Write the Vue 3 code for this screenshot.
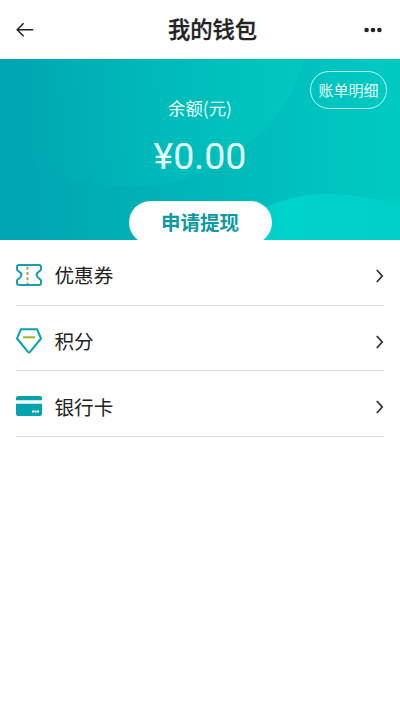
<script setup>
const rows = [
  { id: 'coupon', label: '优惠券' },
  { id: 'points', label: '积分' },
  { id: 'card', label: '银行卡' },
]
</script>

<template>
  <div class="page">
    <header class="bar">
      <svg class="back" width="18" height="16" viewBox="0 0 18 16" fill="none" stroke="#222" stroke-width="1.5">
        <path d="M7.6 1.2 1.2 7.7l6.4 6.6M1.2 7.7H17.3" />
      </svg>
      <h1 class="title">我的钱包</h1>
      <svg class="more" width="18" height="6" viewBox="0 0 18 6" fill="#222">
        <circle cx="2.6" cy="3" r="2.3" />
        <circle cx="9" cy="3" r="2.3" />
        <circle cx="15.4" cy="3" r="2.3" />
      </svg>
    </header>

    <section class="balance">
      <svg class="waves" viewBox="0 0 400 181" preserveAspectRatio="none">
        <defs>
          <linearGradient id="base" gradientUnits="userSpaceOnUse" x1="20" y1="80" x2="390" y2="80">
            <stop offset="0" stop-color="#00a6b2" />
            <stop offset="0.5" stop-color="#00b7ba" />
            <stop offset="1" stop-color="#00cac2" />
          </linearGradient>
          <linearGradient id="glow" gradientUnits="userSpaceOnUse" x1="20" y1="80" x2="290" y2="40">
            <stop offset="0" stop-color="#00cdc0" stop-opacity="0" />
            <stop offset="1" stop-color="#00cdc0" stop-opacity="0.5" />
          </linearGradient>
          <linearGradient id="hill" x1="0" y1="0" x2="1" y2="0">
            <stop offset="0" stop-color="#00cfc8" />
            <stop offset="0.4" stop-color="#00d3cb" />
            <stop offset="1" stop-color="#00cfc7" />
          </linearGradient>
        </defs>
        <rect width="400" height="181" fill="url(#base)" />
        <path d="M0 0H304C296 32 277 62 250 83C216 111 174 128 130 128C85 128 35 112 0 78Z" fill="url(#glow)" />
        <path d="M215 181C245 153 285 135 327 135C355 135 380 140 400 148V181Z" fill="url(#hill)" />
      </svg>
      <button class="bill">账单明细</button>
      <div class="caption">余额(元)</div>
      <div class="amount">¥0.00</div>
      <button class="withdraw">申请提现</button>
    </section>

    <ul class="list">
      <li v-for="row in rows" :key="row.id" class="row">
        <svg class="icon" width="26" height="26" viewBox="0 0 26 26" fill="none">
          <template v-if="row.id === 'coupon'">
            <path d="M3 3H23Q25 3 25 5V7.5C25 9 20.6 9.6 20.6 13S25 17 25 18.5V21Q25 23 23 23H3Q1 23 1 21V18.5C1 17 5.4 16.4 5.4 13S1 9 1 7.5V5Q1 3 3 3Z" stroke="#179ea6" stroke-width="2" />
            <path d="M11.5 4.8V22" stroke="#93ae3c" stroke-width="1.9" stroke-dasharray="3 2.2" />
          </template>
          <template v-else-if="row.id === 'points'">
            <path d="M5 1.2H21L25 10.5 14 23.9Q13 25 12 23.9L1 10.5Z" stroke="#0aa0aa" stroke-width="2" stroke-linejoin="round" />
            <path d="M7 9.3H19" stroke="#a2b51f" stroke-width="2" />
          </template>
          <template v-else>
            <path d="M2 3H24Q26 3 26 5V7.3H0V5Q0 3 2 3ZM0 10.7H26V21Q26 23 24 23H2Q0 23 0 21Z" fill="#05a3ae" />
            <path d="M16 18.5H23" stroke="#fff" stroke-width="2" stroke-dasharray="2 .5" />
          </template>
        </svg>
        <span class="label">{{ row.label }}</span>
        <svg class="chevron" width="8" height="14" viewBox="0 0 8 14" fill="none" stroke="#333" stroke-width="1.8">
          <path d="M.8 1 6.2 7 .8 13" />
        </svg>
      </li>
    </ul>
  </div>
</template>

<style>
body {
  background: #fff;
}
</style>

<style scoped>
.page {
  font-family: Roboto, 'Noto Sans CJK SC', sans-serif;
  color: #222;
  background: #fff;
  min-height: 711px;
}
.bar {
  height: 59px;
  box-sizing: border-box;
  padding: 0 18px 0 16px;
  display: flex;
  align-items: center;
  justify-content: space-between;
}
.title {
  margin: 1px 0 0 27px;
  flex: 1;
  text-align: center;
  font-size: 22.3px;
  line-height: 32px;
  font-weight: 500;
  -webkit-text-stroke: 0.3px #222;
}
.balance {
  position: relative;
  height: 181px;
  overflow: hidden;
  display: flex;
  flex-direction: column;
  align-items: center;
  color: #fff;
}
.waves {
  position: absolute;
  inset: 0;
  width: 100%;
  height: 100%;
}
button {
  font-family: inherit;
  padding: 0;
  cursor: pointer;
}
.bill {
  position: absolute;
  top: 12px;
  right: 13px;
  width: 77px;
  height: 38px;
  border: 1px solid #b5fff9;
  border-radius: 19px;
  background: transparent;
  color: #e4fffc;
  font-size: 15px;
  padding-bottom: 2px;
}
.caption {
  position: relative;
  margin-top: 36px;
  font-family: 'Noto Sans CJK SC', sans-serif;
  font-size: 17.4px;
  line-height: 26px;
  color: #e4fffc;
}
.amount {
  position: relative;
  margin-top: 13px;
  font-size: 37.5px;
  line-height: 44px;
  color: #e4fffc;
}
.withdraw {
  position: relative;
  margin-top: 23px;
  flex: none;
  width: 143px;
  height: 43px;
  border: 0;
  border-radius: 22px;
  background: #fff;
  color: #0d98a3;
  font-size: 19.5px;
  font-weight: 700;
  padding-bottom: 2px;
}
.list {
  list-style: none;
  margin: 0;
  padding: 0 16px;
}
.row {
  box-sizing: border-box;
  height: 65.7px;
  display: flex;
  align-items: center;
  border-bottom: 1px solid #ddd;
  padding-top: 5px;
}
.label {
  flex: 1;
  margin-left: 12.5px;
  padding-top: 5px;
  font-size: 19.6px;
  line-height: 28px;
}
.chevron {
  margin-top: 2px;
}
</style>
